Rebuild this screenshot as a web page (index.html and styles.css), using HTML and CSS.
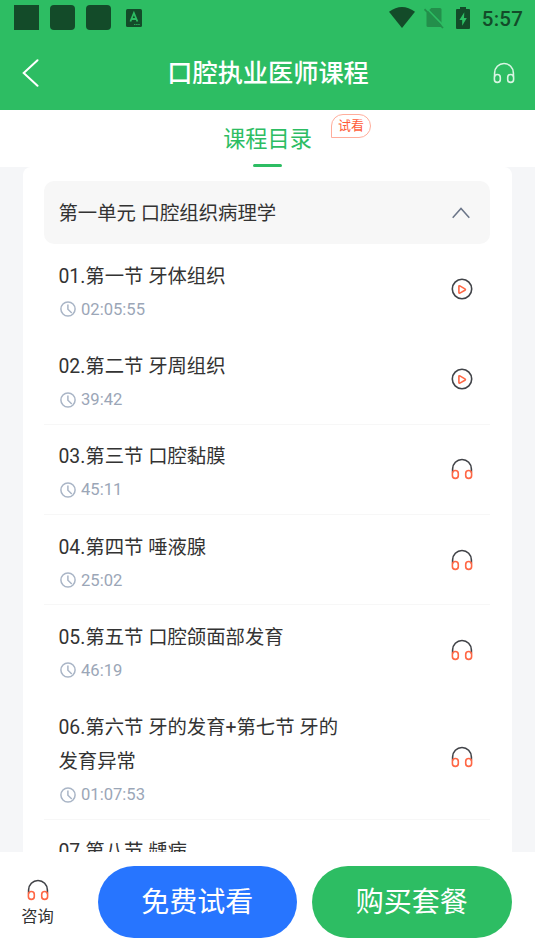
FILE: index.html
```html
<!DOCTYPE html>
<html lang="zh-CN">
<head>
<meta charset="utf-8">
<title>口腔执业医师课程</title>
<link rel="stylesheet" href="styles.css">
</head>
<body>
<svg class="defs" aria-hidden="true">
  <symbol id="headphones" viewBox="0 0 22 22">
    <path class="band" d="M1.6 14.5V11a9.4 9.5 0 0 1 18.8 0V14.5"/>
    <rect class="cup" x="1.4" y="12.5" width="5.9" height="7.9" rx="2.95"/>
    <rect class="cup" x="14.7" y="12.5" width="5.9" height="7.9" rx="2.95"/>
  </symbol>
  <symbol id="play" viewBox="0 0 22 22">
    <circle class="band" cx="11" cy="11" r="9.7"/>
    <path class="cup" d="M7.9 8.3v6.1q0 1 1 .7l5-2.8q1.1-.7 0-1.5l-5-2.9q-1-.4-1 .4z"/>
  </symbol>
  <symbol id="clock" viewBox="0 0 16 16">
    <circle cx="8" cy="8" r="7.1"/>
    <path d="M7.9 3.6v4.6l3.9 3.8"/>
  </symbol>
</svg>
<header class="top">
  <div class="status">
    <div class="notices">
      <i class="block square"></i><i class="block"></i><i class="block"></i>
      <svg class="a-icon" viewBox="0 0 16 18"><rect width="16" height="18" rx="1.5" fill="#134b29"/><path d="M4.4 12.5L7.9 4l3.5 8.5M5.7 10h4.4" fill="none" stroke="#2dbd63" stroke-width="1.8"/><path d="M8.2 15.5h6" stroke="#2dbd63" stroke-width="1" stroke-dasharray="1.2 .9"/></svg>
    </div>
    <div class="system">
      <svg class="wifi" viewBox="0 0 26 21"><path d="M0 4.7Q13-4.7 26 4.7L13 21z" fill="#134b29"/></svg>
      <svg class="sim" viewBox="0 0 20 22"><path d="M7.3 1H16q1.5 0 1.5 1.5V20H4q-1.5 0-1.5-1.5V5.8z" fill="#238f4b"/><path d="M2 .7L20.5 19.7" stroke="#2dbd63" stroke-width="1.6"/><path d="M.5 2.2L19 21" stroke="#238f4b" stroke-width="1.7"/></svg>
      <svg class="battery" viewBox="0 0 14 22"><path d="M4 0h6v2h3q1 0 1 1v18q0 1-1 1H1q-1 0-1-1V3q0-1 1-1h3z" fill="#134b29"/><path d="M8.3 5.2L3.4 13h2.8v5.8L10.8 11H8z" fill="#2dbd63"/></svg>
      <span class="time">5:57</span>
    </div>
  </div>
  <div class="nav">
    <svg class="back" viewBox="0 0 17 28"><path d="M15.5 1.2L1.7 14l13.8 12.8"/></svg>
    <h1>口腔执业医师课程</h1>
    <svg class="icon light"><use href="#headphones"/></svg>
  </div>
</header>
<nav class="tabs">
  <div class="tab">课程目录<span class="badge">试看</span></div>
</nav>
<main>
  <section class="card">
    <div class="unit"><h2>第一单元 口腔组织病理学</h2><svg class="chevron" viewBox="0 0 18 12"><path d="M.7 10.8L9 1.4l8.3 9.4"/></svg></div>
    <article class="lesson plain"><div class="info"><h3>01.第一节 牙体组织</h3><p><svg><use href="#clock"/></svg>02:05:55</p></div><svg class="icon"><use href="#play"/></svg></article>
    <article class="lesson"><div class="info"><h3>02.第二节 牙周组织</h3><p><svg><use href="#clock"/></svg>39:42</p></div><svg class="icon"><use href="#play"/></svg></article>
    <article class="lesson"><div class="info"><h3>03.第三节 口腔黏膜</h3><p><svg><use href="#clock"/></svg>45:11</p></div><svg class="icon"><use href="#headphones"/></svg></article>
    <article class="lesson"><div class="info"><h3>04.第四节 唾液腺</h3><p><svg><use href="#clock"/></svg>25:02</p></div><svg class="icon"><use href="#headphones"/></svg></article>
    <article class="lesson plain"><div class="info"><h3>05.第五节 口腔颌面部发育</h3><p><svg><use href="#clock"/></svg>46:19</p></div><svg class="icon"><use href="#headphones"/></svg></article>
    <article class="lesson"><div class="info"><h3>06.第六节 牙的发育+第七节 牙的<br>发育异常</h3><p><svg><use href="#clock"/></svg>01:07:53</p></div><svg class="icon"><use href="#headphones"/></svg></article>
    <article class="lesson"><div class="info"><h3>07.第八节 龋病</h3></div></article>
  </section>
</main>
<footer>
  <div class="consult"><svg class="icon"><use href="#headphones"/></svg><span>咨询</span></div>
  <button class="trial">免费试看</button>
  <button class="buy">购买套餐</button>
</footer>
</body>
</html>
```
FILE: styles.css
```css
* { box-sizing: border-box; }
body {
  margin: 0;
  height: 952px;
  overflow: hidden;
  display: flex;
  flex-direction: column;
  font-family: Roboto, "Noto Sans CJK SC", sans-serif;
  color: #333;
  background: #fff;
}
h1, h2, h3, p { margin: 0; font-weight: 400; }
svg { display: block; flex: none; fill: none; }
.defs { position: absolute; width: 0; height: 0; }
.top { height: 110px; flex: none; background: #2dbd63; }
.status { height: 36px; display: flex; justify-content: space-between; padding: 0 12px 0 14px; }
.notices, .system { display: flex; align-items: center; padding-bottom: 1px; }
.notices { gap: 11px; }
.block { width: 25px; height: 25px; border-radius: 4px; background: #134b29; }
.square { border-radius: 0; }
.a-icon { width: 16px; height: 18px; margin-left: 4px; }
.wifi { width: 26px; height: 21px; margin-right: 9px; }
.sim { width: 20px; height: 22px; margin-right: 12px; }
.battery { width: 14px; height: 22px; margin-right: 12px; }
.time { font-size: 20.5px; font-weight: 500; letter-spacing: .2px; color: #134b29; line-height: 38px; padding-top: 2px; }
.nav { height: 74px; display: flex; align-items: center; justify-content: space-between; padding: 0 20px 0 22px; }
.nav h1 { font-size: 25.2px; font-weight: 500; line-height: 38px; color: #fff; padding-left: 4px; margin-top: 1px; }
.back { width: 17px; height: 28px; stroke: #fff; stroke-width: 2; stroke-linecap: round; }
.icon { width: 22px; height: 22px; --band: #414348; --cup: #ff6745; }
.light { --band: #d9f5e3; --cup: #d9f5e3; }
.band { stroke: var(--band); stroke-width: 1.6; }
.cup { stroke: var(--cup); stroke-width: 1.6; }
.tabs { height: 57px; flex: none; display: flex; justify-content: center; }
.tab { position: relative; font-size: 22.2px; line-height: 58px; height: 57px; color: #2dbd63; }
.tab::after { content: ""; position: absolute; left: 50%; bottom: 0; width: 29px; height: 3px; margin-left: -14.5px; border-radius: 2px; background: #2dbd63; }
.badge { position: absolute; left: 108px; top: 4px; width: 40px; height: 24px; border: 1px solid #ffad9b; border-radius: 12px 12px 12px 0; font-size: 13px; line-height: 22px; text-align: center; color: #ff5b38; }
main { flex: 1; min-height: 0; overflow: hidden; background: #f5f6f8; padding: 0 23px; }
.card { height: 800px; padding: 14px 22px 14px 21px; background: #fff; border-radius: 8px 8px 0 0; }
.unit { height: 63px; display: flex; align-items: center; justify-content: space-between; padding: 0 20px 0 14.5px; border-radius: 10px; background: #f7f7f7; }
.unit h2 { font-size: 19.35px; line-height: 34px; padding-top: 2px; }
.chevron { width: 18px; height: 12px; stroke: #6b7588; stroke-width: 1.5; }
.lesson { min-height: 90.3px; display: flex; align-items: center; justify-content: space-between; padding: 15.8px 17.5px 8.5px 14.5px; border-bottom: 1px solid #f7f7f7; }
.plain { border-color: transparent; }
.lesson h3 { font-size: 19.35px; line-height: 34px; white-space: nowrap; }
.lesson p { height: 31px; display: flex; align-items: center; gap: 5px; padding-left: 1.5px; font-size: 16.6px; color: #9ba6b7; }
.lesson p svg { width: 16px; height: 16px; stroke: #a9b5c6; stroke-width: 1.5; }
.lesson .icon { margin-top: -7px; }
.lesson:last-child { align-items: flex-start; padding-top: 15px; }
footer { height: 100px; flex: none; display: flex; align-items: flex-start; padding: 14px 23px 0 21px; background: #fff; }
.consult { width: 33px; margin-right: 43.5px; padding-top: 13px; display: flex; flex-direction: column; align-items: center; font-size: 16.3px; line-height: 24px; }
.consult span { margin-top: 4px; }
button { width: 199.5px; height: 71.5px; padding: 2px 0 0; border: 0; border-radius: 36px; font: 28px/42px Roboto, "Noto Sans CJK SC", sans-serif; color: #fff; }
.trial { background: #2775ff; margin-right: 15px; }
.buy { background: #2dbd63; }
```
